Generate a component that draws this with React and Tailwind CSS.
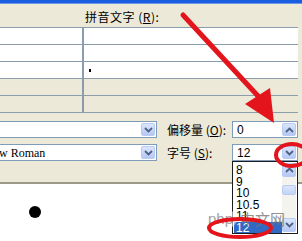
// Word 拼音指南 dialog — font size dropdown annotated
const font = { fontFamily: '"Noto Sans CJK SC", "Liberation Sans", sans-serif' };

const Chevron = ({ up = false }) => (
  <svg width="9" height="6" viewBox="0 0 9 6">
    <path
      d={up ? 'M1 5 L4.5 1.5 L8 5' : 'M1 1 L4.5 4.5 L8 1'}
      fill="none"
      stroke="#4d6185"
      strokeWidth="1.8"
    />
  </svg>
);

const DropButton = ({ up }) => (
  <div className="w-[14px] h-full flex items-center justify-center bg-gradient-to-b from-[#dbe6fd] to-[#b5c8f5] border border-[#b8cbf2] rounded-[2px]">
    <Chevron up={up} />
  </div>
);

const TableRow = ({ white, dot }) => (
  <div className="flex h-[17px] border-b border-[#8b9cad]">
    <div className={`w-[84px] border-r-2 border-[#8b9cad] ${white ? 'bg-white' : 'bg-[#ece9d8]'}`}></div>
    <div className={`flex-1 ${white ? 'bg-white' : 'bg-[#ece9d8]'} relative`}>
      {dot && <span className="absolute left-[5px] top-[7px] w-[2px] h-[3px] bg-black"></span>}
    </div>
  </div>
);

const listItems = ['8', '9', '10', '10.5', '11', '12'];

export default function App() {
  return (
    <div className="w-[302px] h-[241px] bg-white relative overflow-hidden text-[12px] text-black" style={font}>
      {/* 标题栏 */}
      <div className="h-[4px] bg-[#1a5ee0] border-b border-[#6e95e8]"></div>

      {/* 对话框主体 */}
      <div className="h-[180px] bg-[#ece9d8] border-b-2 border-[#9d9a8c]">
        <div className="flex h-[23px]">
          <div className="w-[85px]"></div>
          <div className="pt-[6px] leading-[13px] tracking-[0.5px]">
            拼音文字 (<span className="underline">R</span>):
          </div>
        </div>

        <div className="mr-[4px] border-t border-[#8b9cad]">
          <TableRow white />
          <TableRow white />
          <TableRow white dot />
          <TableRow />
          <TableRow />
        </div>

        <div className="mt-[8px] flex flex-col gap-[6px]">
          <div className="flex h-[17px] items-center">
            <div className="w-[157px] h-full bg-white border border-l-0 border-[#7f9db9] flex justify-end p-px">
              <DropButton />
            </div>
            <div className="w-[75px] pl-[10px] leading-[13px]">
              偏移量 (<span className="underline">O</span>):
            </div>
            <div className="w-[66px] h-full bg-white border border-[#7f9db9] flex p-px">
              <span className="flex-1 pl-[3px] leading-[14px]" style={{ fontFamily: '"Liberation Sans", sans-serif' }}>0</span>
              <DropButton up />
            </div>
          </div>
          <div className="flex h-[17px] items-center">
            <div className="w-[157px] h-full bg-white border border-l-0 border-[#7f9db9] flex p-px">
              <span className="flex-1 ml-[-2px] leading-[14px] text-[12px]" style={{ fontFamily: '"Liberation Serif", serif' }}>w Roman</span>
              <DropButton />
            </div>
            <div className="w-[75px] pl-[10px] leading-[13px]">
              字号 (<span className="underline">S</span>):
            </div>
            <div className="w-[66px] h-full bg-white border border-[#7f9db9] flex p-px">
              <span className="flex-1 pl-[3px] leading-[14px]" style={{ fontFamily: '"Liberation Sans", sans-serif' }}>12</span>
              <DropButton />
            </div>
          </div>
        </div>
      </div>

      {/* 黑点 */}
      <div className="ml-[29px] mt-[22px] w-[12px] h-[12px] rounded-full bg-black"></div>

      {/* 下拉列表 */}
      <div className="absolute left-[232px] top-[161px] w-[66px] h-[73px] bg-white border border-[#1c1c1c] flex p-px">
        <div className="flex-1 flex flex-col pt-[1px]" style={{ fontFamily: '"Liberation Sans", sans-serif' }}>
          {listItems.map(item => (
            <div
              key={item}
              className={`h-[11.5px] leading-[12px] pl-[2px] text-[12px] ${item === '12' ? 'bg-[#316ac5] text-white' : ''}`}
            >
              {item}
            </div>
          ))}
        </div>
        <div className="w-[14px] flex flex-col bg-[#f4f3ee]">
          <div className="h-[14px]"><DropButton up /></div>
          <div className="mt-[8px] h-[10px] bg-gradient-to-b from-[#dbe6fd] to-[#c3d3f6] border border-[#b8cbf2] rounded-[2px]"></div>
          <div className="flex-1"></div>
          <div className="h-[14px]"><DropButton /></div>
        </div>
      </div>

      {/* 水印 */}
      <div className="absolute left-[204px] top-[210px] flex items-center gap-[3px] opacity-80">
        <span className="px-[4px] h-[18px] leading-[17px] rounded-full bg-white/70 text-[#8a8a8a] text-[15px]" style={{ fontFamily: '"Liberation Sans", sans-serif' }}>php</span>
        <span className="text-[#777] text-[15px] leading-[18px]">中文网</span>
      </div>

      {/* 红色标注 */}
      <svg className="absolute left-0 top-0" width="302" height="241" viewBox="0 0 302 241">
        <line x1="183" y1="15" x2="258" y2="96" stroke="#e3141b" strokeWidth="5" strokeLinecap="round" />
        <polygon points="245,104 270,88 274,123" fill="#e3141b" />
        <ellipse cx="292" cy="155" rx="16" ry="11" fill="none" stroke="#e3141b" strokeWidth="4" />
        <ellipse cx="240" cy="228" rx="31" ry="9" fill="none" stroke="#e3141b" strokeWidth="4" />
      </svg>
    </div>
  );
}
